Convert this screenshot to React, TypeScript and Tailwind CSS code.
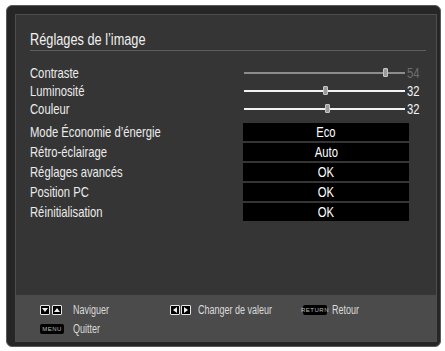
const font = { fontFamily: '"Liberation Sans", Arial, sans-serif' };

function T({ children, center }: any) {
  return (
    <span
      className={
        center
          ? "inline-block whitespace-nowrap origin-center scale-x-[0.75]"
          : "inline-block whitespace-nowrap origin-left scale-x-[0.75]"
      }
    >
      {children}
    </span>
  );
}

function SliderRow({ label, value, pos, dim }: any) {
  return (
    <div className="flex items-center h-[18px]">
      <div className="w-[213px] text-[15px] leading-[18px] text-[#ececec]">
        <T>{label}</T>
      </div>
      <div className="relative ml-[1px] w-[161px] h-[2px]">
        <div className={dim ? "h-[2px] bg-[#8c8c8c]" : "h-[2px] bg-[#f2f2f2]"} />
        <div
          className="absolute top-[-4px] w-[5px] h-[9px] rounded-[1px] bg-[#9a9a9a] border border-[#c8c8c8]"
          style={{ left: pos }}
        />
      </div>
      <div
        className={
          dim
            ? "ml-[2px] text-[15px] leading-[18px] text-[#6e6e6e]"
            : "ml-[2px] text-[15px] leading-[18px] text-[#f4f4f4]"
        }
      >
        <T>{value}</T>
      </div>
    </div>
  );
}

function BoxRow({ label, value }: any) {
  return (
    <div className="flex items-center h-[20px]">
      <div className="w-[213px] text-[15px] leading-[18px] text-[#ececec]">
        <T>{label}</T>
      </div>
      <div className="w-[166px] h-[18px] bg-black flex items-center justify-center text-[15px] text-white">
        <T center>{value}</T>
      </div>
    </div>
  );
}

function Key({ children }: any) {
  return (
    <div className="w-[10px] h-[10px] bg-black border border-[#e6e6e6] rounded-[1px] flex items-center justify-center">
      {children}
    </div>
  );
}

function Tri({ dir }: any) {
  const d: any = {
    down: "M1 2 L7 2 L4 6 Z",
    up: "M1 6 L7 6 L4 2 Z",
    left: "M6 1 L6 7 L2 4 Z",
    right: "M2 1 L2 7 L6 4 Z",
  };
  return (
    <svg width="8" height="8" viewBox="0 0 8 8">
      <path d={d[dir]} fill="#f0f0f0" />
    </svg>
  );
}

function Pill({ text }: any) {
  return (
    <div className="w-[24px] h-[10px] bg-black rounded-[2px] flex items-center justify-center text-[6px] leading-none text-[#bbbbbb] tracking-[0.5px]">
      {text}
    </div>
  );
}

export default function App() {
  return (
    <div className="w-[445px] h-[351px] bg-white pt-[5px] pl-[6px]" style={font}>
      <div className="w-[435px] h-[342px] rounded-[6px] bg-[#262626] border border-[#5a5a5a] pl-[8px] pt-[8px] pr-[3px] pb-[4px]">
        <div className="h-full flex flex-col bg-[#353535] border border-[#4e4e4e]">
          <div className="flex-1">
            <div className="ml-[14px] mr-[10px] pt-[15px] h-[36px] border-b border-[#5e5e5e] text-[17px] leading-[20px] text-[#f0f0f0]">
              <T>Réglages de l’image</T>
            </div>
            <div className="ml-[14px] mt-[13px]">
              <SliderRow label="Contraste" value="54" pos={139} dim />
              <SliderRow label="Luminosité" value="32" pos={79} />
              <SliderRow label="Couleur" value="32" pos={81} />
              <div className="mt-[4px]">
                <BoxRow label="Mode Économie d’énergie" value="Eco" />
                <BoxRow label="Rétro-éclairage" value="Auto" />
                <BoxRow label="Réglages avancés" value="OK" />
                <BoxRow label="Position PC" value="OK" />
                <BoxRow label="Réinitialisation" value="OK" />
              </div>
            </div>
          </div>
          <div className="h-[46px] bg-[#4b4b4b] pl-[24px] pt-[9px] text-[12px] leading-[12px] text-[#dcdcdc]">
            <div className="flex items-center h-[12px]">
              <div className="w-[130px] flex items-center">
                <Key><Tri dir="down" /></Key>
                <div className="ml-[2px]"><Key><Tri dir="up" /></Key></div>
                <span className="ml-[11px]"><T>Naviguer</T></span>
              </div>
              <div className="w-[133px] flex items-center">
                <Key><Tri dir="left" /></Key>
                <div className="ml-[1px]"><Key><Tri dir="right" /></Key></div>
                <span className="ml-[7px]"><T>Changer de valeur</T></span>
              </div>
              <div className="flex items-center">
                <Pill text="RETURN" />
                <span className="ml-[5px]"><T>Retour</T></span>
              </div>
            </div>
            <div className="flex items-center h-[12px] mt-[7px]">
              <Pill text="MENU" />
              <span className="ml-[9px]"><T>Quitter</T></span>
            </div>
          </div>
        </div>
      </div>
    </div>
  );
}
